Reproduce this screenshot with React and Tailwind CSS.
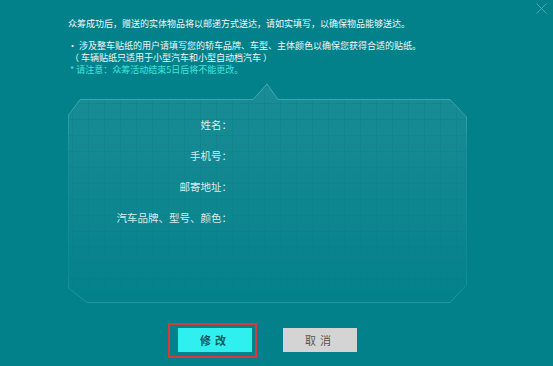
import React from 'react';

const fields = ['姓名：', '手机号：', '邮寄地址：', '汽车品牌、型号、颜色：'];

function PanelShape() {
  const outline =
    'M0.5 32 L12 16.5 L185 16.5 L199 1 L210 16.5 L382 16.5 L398.5 34 L398.5 202 L382 219.5 L19 219.5 L0.5 205 Z';
  return (
    <svg className="absolute inset-0" width="399" height="220" viewBox="0 0 399 220">
      <defs>
        <pattern id="grid" width="16" height="16" patternUnits="userSpaceOnUse" x="4" y="4">
          <path d="M16 0 L0 0 L0 16" fill="none" stroke="rgba(0,60,70,0.16)" strokeWidth="1" />
        </pattern>
        <linearGradient id="fade" x1="0" y1="0" x2="0" y2="1">
          <stop offset="0" stopColor="#ffffff" stopOpacity="0.09" />
          <stop offset="0.6" stopColor="#ffffff" stopOpacity="0.04" />
          <stop offset="1" stopColor="#ffffff" stopOpacity="0" />
        </linearGradient>
        <linearGradient id="gridFade" x1="0" y1="0" x2="0" y2="1">
          <stop offset="0" stopColor="#fff" stopOpacity="1" />
          <stop offset="0.75" stopColor="#fff" stopOpacity="0.2" />
          <stop offset="1" stopColor="#fff" stopOpacity="0" />
        </linearGradient>
        <mask id="gm">
          <rect width="399" height="220" fill="url(#gridFade)" />
        </mask>
        <linearGradient id="edge" x1="0" y1="0" x2="0" y2="1">
          <stop offset="0" stopColor="#8ee9ea" stopOpacity="0.4" />
          <stop offset="0.3" stopColor="#8ee9ea" stopOpacity="0.12" />
          <stop offset="0.85" stopColor="#8ee9ea" stopOpacity="0.06" />
          <stop offset="1" stopColor="#8ee9ea" stopOpacity="0.22" />
        </linearGradient>
      </defs>
      <path d={outline} fill="url(#fade)" />
      <path d={outline} fill="url(#grid)" mask="url(#gm)" />
      <path d={outline} fill="none" stroke="url(#edge)" strokeWidth="1" />
    </svg>
  );
}

export default function App() {
  return (
    <div className="relative w-[553px] h-[366px] overflow-hidden bg-[#03818b] font-['Noto_Sans_CJK_SC',sans-serif]">
      <svg className="absolute top-[3px] right-[6px]" width="11" height="11" viewBox="0 0 11 11">
        <path d="M0.5 0.5 L10.5 10.5 M10.5 0.5 L0.5 10.5" stroke="#4fb8bc" strokeWidth="0.8" />
      </svg>

      <div className="pt-[18px] pl-[68px] text-[9px] leading-[12px] text-[#eef8f8]">
        <p>众筹成功后，赠送的实体物品将以邮递方式送达，请如实填写，以确保物品能够送达。</p>
        <p className="mt-[10px]">· 涉及整车贴纸的用户请填写您的轿车品牌、车型、主体颜色以确保您获得合适的贴纸。</p>
        <p className="pl-[2px]">（ 车辆贴纸只适用于小型汽车和小型自动档汽车 ）</p>
        <p className="pl-[2px] text-[#3de6dc]">* 请注意：众筹活动结束5日后将不能更改。</p>
      </div>

      <div className="relative ml-[68px] mt-[7px] w-[399px] h-[220px]">
        <PanelShape />
        <div className="relative flex flex-col gap-[17px] pt-[35px] w-[164px] text-right text-[10.5px] leading-[14px] text-[#d6ecec]">
          {fields.map((f) => (
            <div key={f}>{f}</div>
          ))}
        </div>
      </div>

      <div className="relative flex gap-[31px] ml-[178px] mt-[25px]">
        <button className="w-[74px] h-[24px] bg-[#30f0ef] text-[11px] font-bold tracking-[4px] text-[#135a5e]">
          修改
        </button>
        <button className="w-[74px] h-[24px] bg-[#d4d4d4] text-[11px] tracking-[4px] text-[#555]">
          取消
        </button>
        <div className="absolute left-[-10px] top-[-5px] w-[89px] h-[35px] border-2 border-[#d8393c]" />
      </div>
    </div>
  );
}
